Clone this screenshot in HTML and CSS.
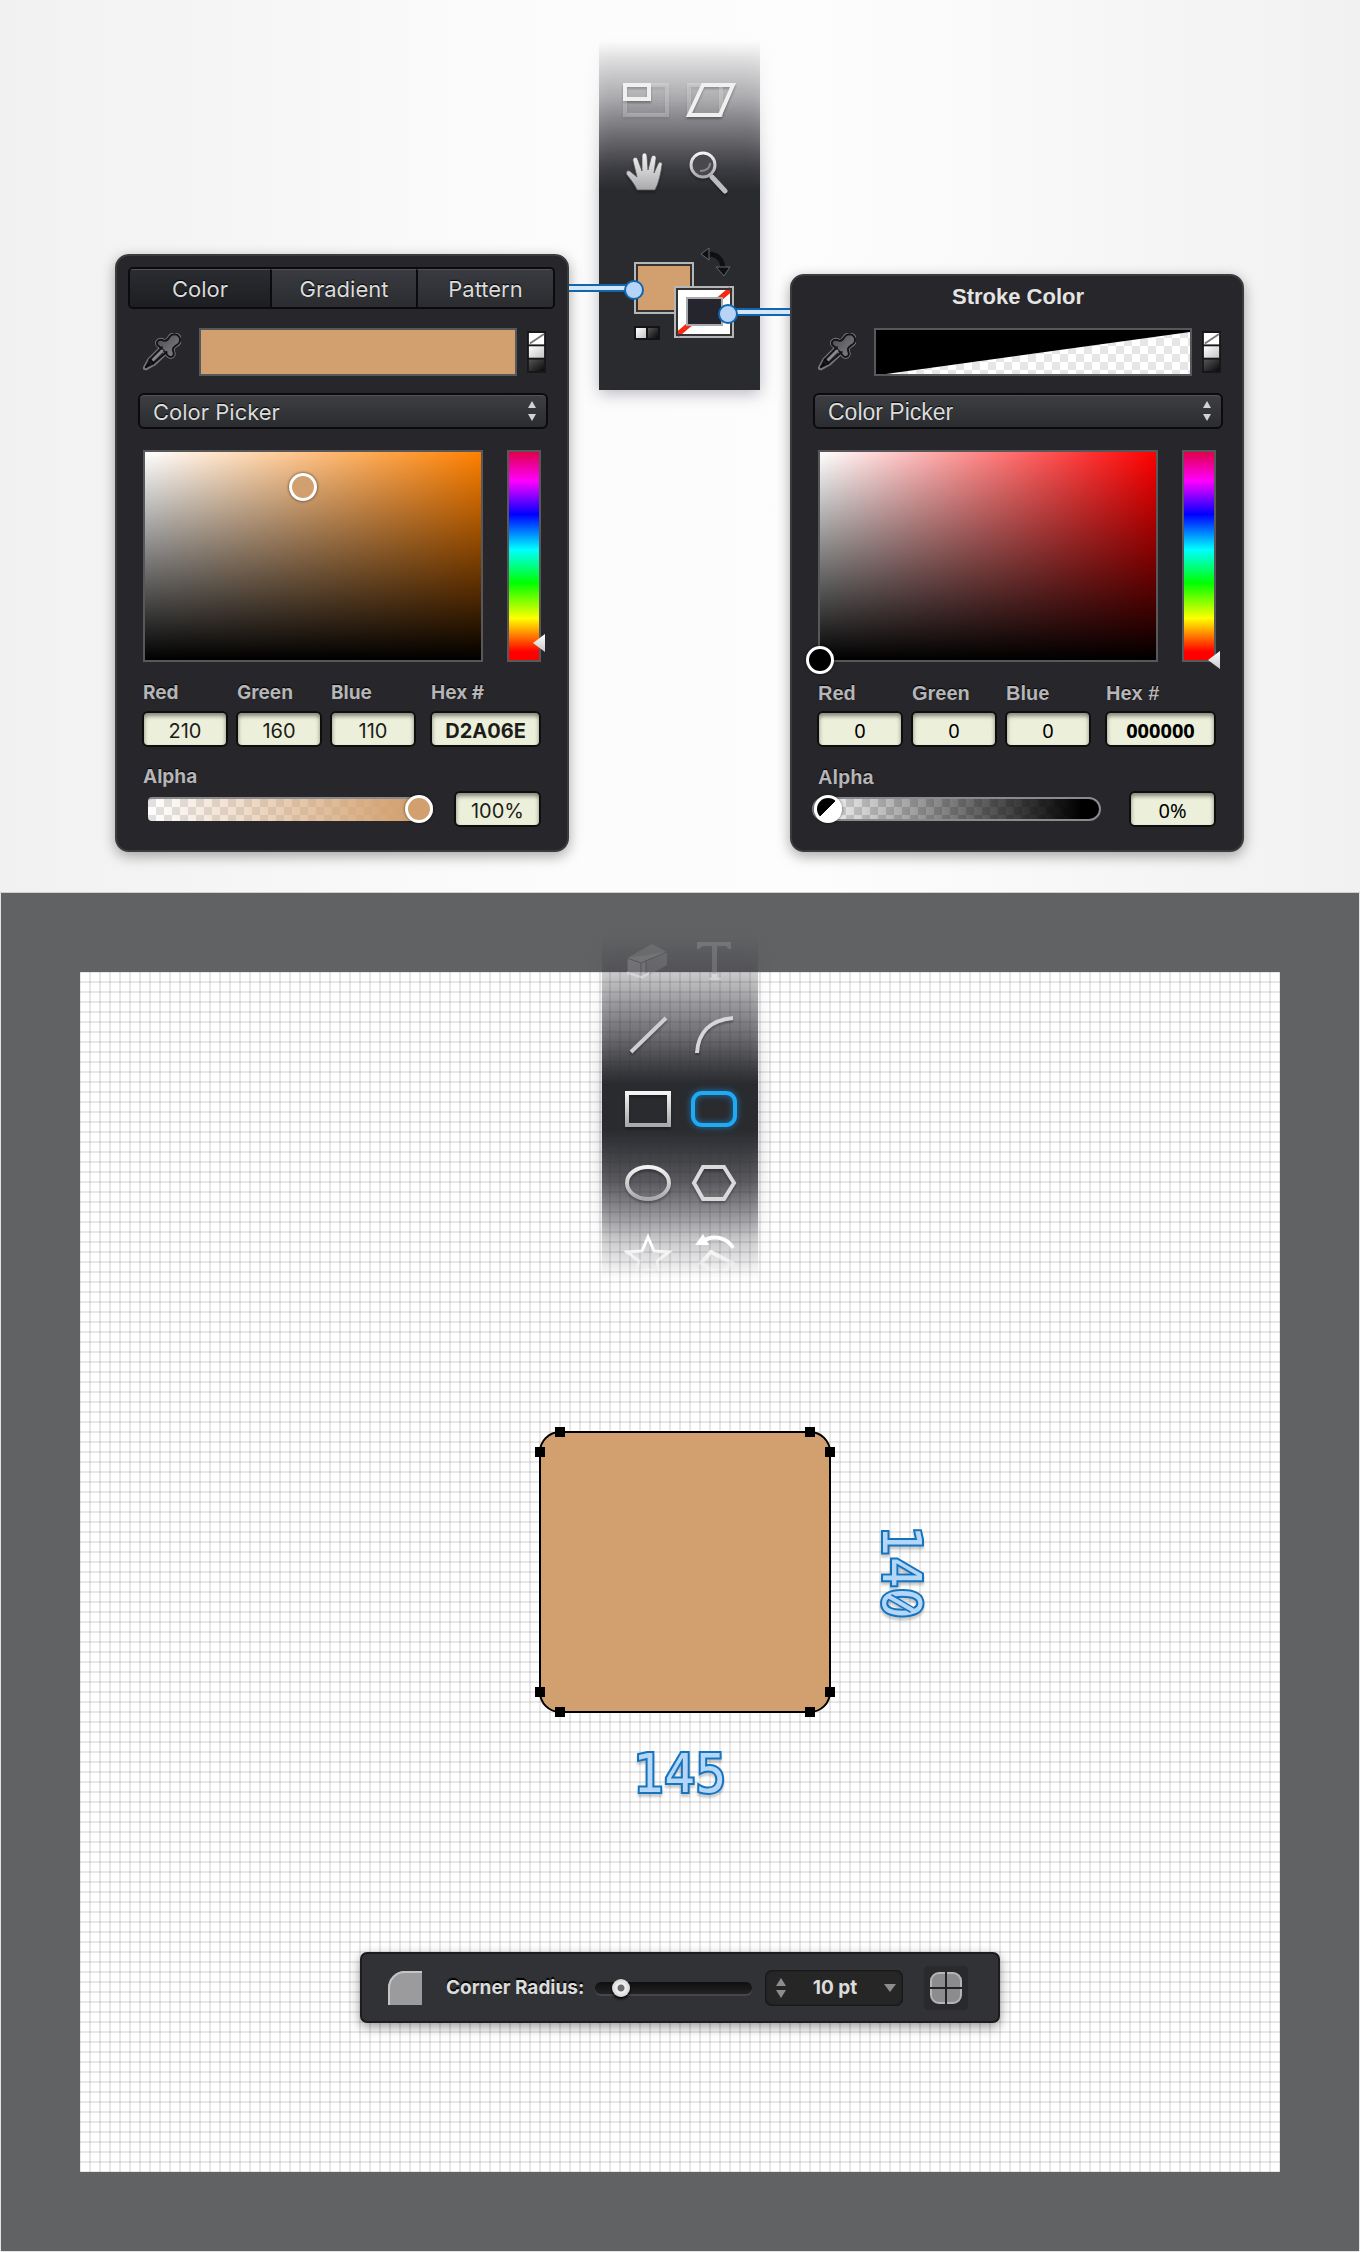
FILE: index.html
```html
<!DOCTYPE html>
<html lang="en">
<head>
<meta charset="utf-8">
<title>Rounded rectangle: fill and stroke</title>
<link rel="stylesheet" href="styles.css">
</head>
<body>
<svg class="defs" aria-hidden="true">
  <defs>
    <linearGradient id="metal" x1="0" y1="0" x2="0" y2="1"><stop offset="0" stop-color="#f4f4f4"/><stop offset="1" stop-color="#a9a9ab"/></linearGradient>
    <linearGradient id="rubber" x1="0" y1="0" x2="1" y2="1"><stop offset="0" stop-color="#4a4a4d"/><stop offset="1" stop-color="#85858a"/></linearGradient>
    <linearGradient id="light" x1="0" y1="0" x2="1" y2="1"><stop offset="0" stop-color="#fff"/><stop offset="1" stop-color="#c4c4c4"/></linearGradient>
    <linearGradient id="dark" x1="0" y1="0" x2="1" y2="1"><stop offset="0" stop-color="#555"/><stop offset="1" stop-color="#0a0a0a"/></linearGradient>
    <pattern id="checks" width="16" height="16" patternUnits="userSpaceOnUse"><rect width="16" height="16" fill="#fff"/><path d="M0 0h8v8H0zM8 8h8v8H8z" fill="#e6e6e6"/></pattern>
    <symbol id="dropper" viewBox="0 0 40 40">
      <g stroke-linejoin="round" stroke-linecap="round">
        <path d="M21 13 6 28 1 37l2 1 9-5 15-14z" fill="#29292d" stroke="#77777a" stroke-width="3"/>
        <path d="M15 9c2-3 5-2 7-1 3 1 4-1 6-4 3-4 8-3 10 0s1 7-3 9c-4 3-4 4-3 7 1 2 0 5-2 5-2 1-4-1-6-4l-7-7c-2-1-3-3-2-5z" fill="url(#rubber)" stroke="#77777a" stroke-width="4"/>
        <path d="M15 9c2-3 5-2 7-1 3 1 4-1 6-4 3-4 8-3 10 0s1 7-3 9c-4 3-4 4-3 7 1 2 0 5-2 5-2 1-4-1-6-4l-7-7c-2-1-3-3-2-5z" fill="url(#rubber)" stroke="#151518" stroke-width="2"/>
        <path d="M20 15 7 28l-4 8 8-4 14-12" fill="none" stroke="#151518" stroke-width="2"/>
        <path d="m20 19-9 9" fill="none" stroke="#8a8a8d" stroke-width="3"/>
        <path d="m7 28 4 4m-8 4 4-4" fill="none" stroke="#0c0c0d" stroke-width="2"/>
      </g>
    </symbol>
    <symbol id="presets" viewBox="0 0 20 44">
      <rect width="20" height="44" fill="#17171a"/>
      <rect x="2" y="2" width="16" height="12" fill="#fff"/><path d="M3 13 18 3" stroke="#77777a" stroke-width="2"/>
      <rect x="2" y="16" width="16" height="12" fill="url(#light)"/>
      <rect x="2" y="30" width="16" height="12" fill="url(#dark)"/>
    </symbol>
    <symbol id="updown" viewBox="0 0 8 20"><path d="M4 0 8 7H0zM4 20 0 13h8z" fill="#d2d2d2"/></symbol>
  </defs>
</svg>

<section class="stage">
  <form class="panel panel--fill" aria-label="Fill color">
    <div class="tabs">
      <button type="button" class="tab tab--active">Color</button>
      <button type="button" class="tab">Gradient</button>
      <button type="button" class="tab">Pattern</button>
    </div>
    <div class="swatch-row">
      <button type="button" class="bare" aria-label="Pick color from screen"><svg class="dropper"><use href="#dropper"/></svg></button>
      <span class="swatch swatch--tan"></span>
      <button type="button" class="bare" aria-label="Presets"><svg class="presets"><use href="#presets"/></svg></button>
    </div>
    <div class="picker">
      <select class="picker-select" aria-label="Picker mode"><option>Color Picker</option></select>
      <svg class="picker-arrows"><use href="#updown"/></svg>
    </div>
    <div class="spectrum">
      <div class="shade shade--orange"><button type="button" class="handle handle--tan" aria-label="Shade" style="left:47%;top:17%"></button></div>
      <div class="hue"><input class="hue-range" type="range" min="0" max="100" value="9" aria-label="Hue"></div>
    </div>
    <div class="fields">
      <label class="field">Red<input class="value" value="210"></label>
      <label class="field">Green<input class="value" value="160"></label>
      <label class="field">Blue<input class="value" value="110"></label>
      <label class="field field--hex">Hex #<input class="value value--hex" value="D2A06E"></label>
    </div>
    <div class="alpha">
      <label class="alpha-label" for="fill-alpha">Alpha</label>
      <div class="alpha-row">
        <input id="fill-alpha" class="alpha-range alpha-range--tan" type="range" value="100">
        <input class="value value--alpha" value="100%" aria-label="Alpha percentage">
      </div>
    </div>
  </form>

  <div class="strip strip--top">
    <div class="tools">
      <button type="button" class="tool" aria-label="Scale"><svg viewBox="0 0 52 48"><rect x="5" y="9" width="42" height="30" fill="none" stroke="#fff" stroke-opacity=".25" stroke-width="4"/><rect x="5" y="9" width="24" height="14" fill="#fff" fill-opacity=".12" stroke="#f0f0f0" stroke-width="4"/></svg></button>
      <button type="button" class="tool" aria-label="Shear"><svg viewBox="0 0 52 48"><rect x="4" y="9" width="32" height="30" fill="none" stroke="#fff" stroke-opacity=".25" stroke-width="4"/><path d="M18 9h30L35 39H4z" fill="#fff" fill-opacity=".1" stroke="#f0f0f0" stroke-width="4"/></svg></button>
      <button type="button" class="tool" aria-label="Hand"><svg viewBox="0 0 52 48"><path d="M17 42c-3-7-7-11-10-15-2-3 1-6 4-3l6 5-4-16c-1-4 4-5 5-1l4 11V8c0-4 5-4 5 0l1 14 3-12c1-4 6-3 5 1l-2 14 4-9c1-3 5-2 4 1-1 7-3 18-7 25z" fill="url(#metal)" stroke="#55565a" stroke-opacity=".8"/></svg></button>
      <button type="button" class="tool" aria-label="Zoom"><svg viewBox="0 0 52 48"><path d="m27 29 13 14" stroke="#bdbdbf" stroke-width="5" stroke-linecap="round"/><circle cx="18" cy="17" r="12" fill="#49494d" stroke="url(#metal)" stroke-width="3"/><path d="M25 15c0 5-4 8-10 8" fill="none" stroke="#8a8a8e" stroke-width="2"/></svg></button>
    </div>
    <div class="wells">
      <svg class="swap" viewBox="0 0 28 30"><path d="M5 6c12-1 17 7 17 15" fill="none" stroke="#101012" stroke-width="5"/><path d="M0 6 8 0v12zM15 19h14l-6 9z" fill="#101012" stroke="#66676a"/></svg>
      <button type="button" class="well well--fill" aria-label="Fill"></button>
      <button type="button" class="well well--stroke" aria-label="Stroke"><svg viewBox="0 0 54 46"><path d="M0 46 54 0" stroke="#f52a12" stroke-width="5"/><path d="M10 9h35v27H10z" fill="#24252d" stroke="#aaaaac" stroke-width="2"/></svg></button>
      <svg class="defaults" viewBox="0 0 26 14"><rect width="26" height="14" fill="#131316"/><rect x="2" y="2" width="10" height="10" fill="url(#light)"/><rect x="14" y="2" width="10" height="10" fill="url(#dark)"/></svg>
    </div>
    <span class="wire wire--left"></span>
    <span class="wire wire--right"></span>
  </div>

  <form class="panel panel--stroke" aria-label="Stroke color">
    <h2 class="panel-title">Stroke Color</h2>
    <div class="swatch-row">
      <button type="button" class="bare" aria-label="Pick color from screen"><svg class="dropper"><use href="#dropper"/></svg></button>
      <span class="swatch"><svg viewBox="0 0 314 44" preserveAspectRatio="none"><rect width="314" height="44" fill="url(#checks)"/><path d="M0 0h314v2L10 44H0z"/></svg></span>
      <button type="button" class="bare" aria-label="Presets"><svg class="presets"><use href="#presets"/></svg></button>
    </div>
    <div class="picker">
      <select class="picker-select" aria-label="Picker mode"><option>Color Picker</option></select>
      <svg class="picker-arrows"><use href="#updown"/></svg>
    </div>
    <div class="spectrum">
      <div class="shade shade--red"><button type="button" class="handle handle--black" aria-label="Shade" style="left:0%;top:100%"></button></div>
      <div class="hue"><input class="hue-range" type="range" min="0" max="100" value="1" aria-label="Hue"></div>
    </div>
    <div class="fields">
      <label class="field">Red<input class="value" value="0"></label>
      <label class="field">Green<input class="value" value="0"></label>
      <label class="field">Blue<input class="value" value="0"></label>
      <label class="field field--hex">Hex #<input class="value value--hex" value="000000"></label>
    </div>
    <div class="alpha">
      <label class="alpha-label" for="stroke-alpha">Alpha</label>
      <div class="alpha-row">
        <input id="stroke-alpha" class="alpha-range alpha-range--black" type="range" value="0">
        <input class="value value--alpha" value="0%" aria-label="Alpha percentage">
      </div>
    </div>
  </form>
</section>

<section class="desk">
  <div class="paper">
    <div class="strip strip--shapes">
      <div class="tools">
        <button type="button" class="tool tool--ghost" aria-label="Eraser"><svg viewBox="0 0 52 48"><path d="m5 21 25-14 15 8v13L22 41 5 34z" fill="#929295"/><path d="m5 21 14 5 26-11M19 26v15M5 21v13l14 8 5-4V24" fill="#fff" fill-opacity=".3" stroke="#505053"/><path d="m5 34 14 5 8-4v3l-7 4-15-5z" fill="#fff"/></svg></button>
        <button type="button" class="tool tool--ghost" aria-label="Text"><svg viewBox="0 0 52 48"><path d="M9 5h34v7h-2l-3-3h-9v31l4 1v2H21v-2l3-1V9h-9l-4 3H9z" fill="#a8a8ab"/><path d="M24 37h5v3l4 1v2H21v-2l3-1z" fill="#fff"/></svg></button>
        <button type="button" class="tool" aria-label="Line"><svg viewBox="0 0 52 48"><path d="M9 41 44 7" stroke="#cfcfd1" stroke-width="4"/></svg></button>
        <button type="button" class="tool" aria-label="Arc"><svg viewBox="0 0 52 48"><path d="M9 42C10 22 22 9 45 7" fill="none" stroke="#d6d6d8" stroke-width="4"/></svg></button>
        <button type="button" class="tool" aria-label="Rectangle"><svg viewBox="0 0 52 48"><rect x="5" y="8" width="42" height="32" fill="none" stroke="url(#metal)" stroke-width="4"/></svg></button>
        <button type="button" class="tool tool--active" aria-label="Rounded rectangle"><svg viewBox="0 0 52 48"><rect x="5" y="8" width="42" height="32" rx="9" fill="none" stroke="#1faaf3" stroke-width="4"/></svg></button>
        <button type="button" class="tool" aria-label="Ellipse"><svg viewBox="0 0 52 48"><ellipse cx="26" cy="24" rx="21" ry="16" fill="none" stroke="url(#metal)" stroke-width="4"/></svg></button>
        <button type="button" class="tool" aria-label="Polygon"><svg viewBox="0 0 52 48"><path d="M15 8h21l10 16-10 16H15L6 24z" fill="none" stroke="#dadadb" stroke-width="4"/></svg></button>
        <button type="button" class="tool tool--fading" aria-label="Star"><svg viewBox="0 0 52 48"><path d="m26 4 6 14 15 1-12 9 4 16-13-8-13 8 4-16L5 19l15-1z" fill="none" stroke="#fff" stroke-width="3"/></svg></button>
        <button type="button" class="tool tool--fading" aria-label="Rotate"><svg viewBox="0 0 52 48"><path d="m7 12 8-11 6 11z" fill="#fff"/><path d="M14 9c10-8 25-5 31 6M13 30l10-11 21 11-12 13z" fill="none" stroke="#fff" stroke-width="4"/></svg></button>
      </div>
    </div>
    <div class="object-row">
      <div class="object">
        <svg viewBox="0 0 300 290" aria-label="Selected rounded rectangle">
          <rect x="5" y="5" width="290" height="280" rx="20" fill="#d2a06e" stroke="#000" stroke-width="2"/>
          <path d="M20 0h10v10H20zM270 0h10v10h-10zM0 20h10v10H0zM290 20h10v10h-10zM0 260h10v10H0zM290 260h10v10h-10zM20 280h10v10H20zM270 280h10v10h-10z"/>
        </svg>
      </div>
      <span class="dimension dimension--height">140<svg class="zero-slash" viewBox="0 0 40 30"><path d="m9 9 22 13" stroke="#1474bd" stroke-width="7"/><path d="m7 8 26 15" stroke="#b4d6f8" stroke-width="4"/></svg></span>
    </div>
    <span class="dimension dimension--width">145</span>
    <form class="radius-bar">
      <svg class="corner" viewBox="0 0 34 34"><path d="M0 34V17A17 17 0 0 1 17 0h17v34z" fill="#9b9b9d"/><path d="M1 34V17A16 16 0 0 1 17 1h17" fill="none" stroke="#c4c4c6" stroke-width="2"/></svg>
      <label class="radius-label" for="radius">Corner Radius:</label>
      <input id="radius" class="radius-range" type="range" value="12">
      <div class="radius-field">
        <svg class="step" viewBox="0 0 10 20"><path d="m5 0 5 8H0zM5 20 0 12h10z" fill="#8d8d8f"/></svg>
        <input class="radius-value" value="10 pt" aria-label="Corner radius value">
        <svg class="drop" viewBox="0 0 12 8"><path d="M0 0h12L6 8z" fill="#8d8d8f"/></svg>
      </div>
      <button type="button" class="corners" aria-label="Choose corners"><svg viewBox="0 0 32 32"><rect x="1" y="1" width="30" height="30" rx="8" fill="#8c8c8f" stroke="#b5b5b7" stroke-width="2"/><path d="M16 0v32M0 16h32" stroke="#232326" stroke-width="2"/></svg></button>
    </form>
  </div>
</section>
</body>
</html>
```
FILE: styles.css
```css
* { box-sizing: border-box; }

body {
  margin: 0;
  padding-bottom: 1px;
  background: #e4e4e4;
  font-family: Inter, "Liberation Sans", sans-serif;
  color: #dcdcdc;
}

button, input, select { font: inherit; color: inherit; margin: 0; }
button { padding: 0; border: 0; background: none; }
svg { display: block; overflow: visible; }
.defs { position: absolute; width: 0; height: 0; }

/* upper half: both color panels joined to the tool strip */
.stage {
  display: flex;
  justify-content: center;
  align-items: flex-end;
  gap: 30px;
  padding: 40px 21px 40px 20px;
  border-bottom: 1px solid #cfcfd0;
  background: linear-gradient(to right, #f1f1f1, #fcfcfc 40%, #fdfdfd 60%, #f1f1f1);
}

.panel {
  width: 454px;
  padding: 11px 19px 23px 21px;
  border: 2px solid #3b3b3e;
  border-radius: 14px;
  background: #27262a;
  box-shadow: 0 4px 14px rgba(0, 0, 0, .35);
}
.panel--fill { margin-top: 214px; }
.panel--stroke { margin-top: 234px; font-family: "Liberation Sans", Arial, sans-serif; }

.panel-title {
  margin: 0 0 21px;
  font-size: 22px;
  line-height: 20px;
  font-weight: 700;
  text-align: center;
  color: #e4e4e4;
}

.tabs {
  display: grid;
  grid-template-columns: 140px 146px 1fr;
  height: 42px;
  margin: 0 -7px 19px -10px;
  border: 2px solid #0b0b0d;
  border-radius: 5px;
  overflow: hidden;
}
.tab {
  border-top: 1px solid #515357;
  background: linear-gradient(#393b40, #2a2c30);
  font-size: 22px;
  line-height: 34px;
  text-shadow: 0 -1px 1px #000;
}
.tab + .tab { border-left: 2px solid #0b0b0d; }
.tab--active { background: linear-gradient(#2b2c31, #1d1e21); }

.swatch-row {
  display: flex;
  align-items: center;
  gap: 10px;
  padding: 0 2px 0 5px;
  margin-bottom: 17px;
}
.dropper { width: 38px; height: 38px; margin-right: 8px; }
.presets { width: 19px; height: 44px; }
.swatch { flex: 1; height: 48px; border: 2px solid #58585b; }
.swatch svg { width: 100%; height: 100%; }
.swatch--tan { background: #d2a06e; }

.picker { position: relative; margin-bottom: 21px; }
.picker-select {
  appearance: none;
  display: block;
  width: 100%;
  height: 36px;
  padding: 2px 13px 0;
  border: 2px solid #0b0b0d;
  border-radius: 6px;
  background: linear-gradient(#3d3f43, #2a2c30);
  box-shadow: inset 0 1px #505256;
  font-size: 22px;
  line-height: 30px;
  text-shadow: 0 -1px 1px #000;
}
.panel--stroke .picker-select { font-size: 23px; }
.picker-arrows {
  position: absolute;
  top: 8px;
  right: 12px;
  width: 8px;
  height: 20px;
  pointer-events: none;
}

.spectrum { display: flex; gap: 24px; padding: 0 7px 0 5px; margin-bottom: 19px; }
.shade { position: relative; flex: 1; height: 212px; border: 2px solid #58585b; }
.shade--orange { background: linear-gradient(to top, #000, transparent), linear-gradient(to right, #fff, #ff8000); }
.shade--red { background: linear-gradient(to top, #000, transparent), linear-gradient(to right, #fff, #f00); }
.handle {
  position: absolute;
  width: 28px;
  height: 28px;
  margin: -14px;
  border: 3px solid #fff;
  border-radius: 50%;
  box-shadow: 0 0 3px rgba(0, 0, 0, .7);
}
.handle--tan { background: #d2a06e; }
.handle--black { background: #000; }

.hue {
  position: relative;
  width: 34px;
  border: 2px solid #58585b;
  background: linear-gradient(#e0004a, #f0f 14%, #00f 30%, #0ff 47%, #0f0 63%, #ff0 80%, #f00 96%);
}
.hue-range {
  appearance: none;
  writing-mode: vertical-lr;
  direction: rtl;
  position: absolute;
  top: -11px;
  left: 24px;
  width: 12px;
  height: 230px;
  background: none;
}
.hue-range::-webkit-slider-thumb {
  appearance: none;
  width: 12px;
  height: 18px;
  background: linear-gradient(#fff, #c9c9c9);
  clip-path: polygon(0 50%, 100% 0, 100% 100%);
}

.fields { display: grid; grid-template-columns: 1fr 1fr 1fr 117px; gap: 8px; padding: 0 7px 0 4px; margin-bottom: 18px; }
.field, .alpha-label {
  display: block;
  font-size: 19px;
  line-height: 24px;
  font-weight: 700;
  color: #b6b6b8;
  text-indent: 1px;
  text-shadow: 0 -1px 1px #000;
}
.field--hex { padding-left: 6px; }
.panel--stroke .field, .panel--stroke .alpha-label { font-size: 20px; }

.value {
  display: block;
  width: 100%;
  height: 36px;
  margin-top: 6px;
  padding: 3px 0 0;
  border: 2px solid #0e0e0d;
  border-radius: 6px;
  background: #ecf0da;
  box-shadow: inset 0 3px 4px rgba(0, 0, 0, .45);
  font-family: Inter, "Liberation Sans", sans-serif;
  font-size: 20px;
  font-weight: 400;
  line-height: 28px;
  text-align: center;
  text-indent: 0;
  color: #1c1d19;
}
.value--hex { font-weight: 700; }
.panel--stroke .value { font-family: "Noto Sans", "Liberation Sans", sans-serif; color: #000; }

.alpha { padding: 0 7px 0 4px; }
.alpha-row { display: flex; align-items: center; justify-content: space-between; margin-top: 2px; }
.value--alpha { width: 87px; margin-top: 0; }
.alpha-range {
  appearance: none;
  width: 285px;
  height: 24px;
  margin-left: 6px;
  background: none;
}
.alpha-range::-webkit-slider-runnable-track {
  height: 24px;
  border: 2px solid #8b8b8d;
  border-radius: 12px;
}
.alpha-range--tan::-webkit-slider-runnable-track {
  border-width: 2px 0 0;
  border-radius: 4px 12px 12px 4px;
  background:
    linear-gradient(to right, rgba(210, 160, 110, 0), #d2a06e 92%),
    repeating-conic-gradient(#fff 0 25%, #e2e2e2 0 50%) 0 0 / 16px 16px;
}
.alpha-range--black { width: 289px; margin-left: -5px; }
.alpha-range--black::-webkit-slider-runnable-track {
  background:
    linear-gradient(to right, rgba(0, 0, 0, 0), #000 94%),
    repeating-conic-gradient(#fff 0 25%, #dcdcdc 0 50%) 0 0 / 16px 16px;
}
.alpha-range::-webkit-slider-thumb {
  appearance: none;
  width: 28px;
  height: 28px;
  margin-top: -4px;
  border: 3px solid #fff;
  border-radius: 50%;
  background: #d2a06e;
  box-shadow: 0 0 3px rgba(0, 0, 0, .6);
}
.alpha-range--black::-webkit-slider-thumb { background: linear-gradient(135deg, #000 50%, #fff 50%); }

/* tool strips fade out into the page */
.strip { position: relative; }
.strip::before {
  content: "";
  position: absolute;
  inset: 0;
  filter: drop-shadow(0 4px 8px rgba(40, 30, 60, .3));
}
.strip > * { position: relative; }
.strip--top { align-self: flex-start; width: 161px; padding: 24px 16px 50px 14px; }
.strip--top::before {
  background: linear-gradient(rgba(42, 43, 47, 0), rgba(42, 43, 47, .12) 20px, rgba(42, 43, 47, .34) 60px, rgba(42, 43, 47, .65) 100px, rgba(42, 43, 47, .88) 128px, #2a2b2f 150px);
}
.tools { display: grid; grid-template-columns: 1fr 1fr; }
.tool { display: grid; place-items: center; height: 72px; }
.tool svg { width: 52px; height: 48px; filter: drop-shadow(0 2px 1px rgba(0, 0, 0, .3)); }

.wells { height: 96px; margin-top: 36px; }
.wells > * { position: absolute; }
.well { width: 60px; height: 52px; border: 2px solid #b4b6b7; outline: 2px solid #333; outline-offset: -4px; }
.well--fill { left: 21px; top: 18px; background: #d2a06e; }
.well--stroke { left: 61px; top: 42px; padding: 1px; background: #fff; }
.well--stroke svg { width: 54px; height: 46px; }
.swap { left: 88px; top: 4px; width: 28px; height: 30px; }
.defaults { left: 21px; top: 82px; width: 26px; height: 14px; }

.strip > .wire {
  position: absolute;
  height: 8px;
  border: solid #1067ae;
  border-width: 2px 0;
  background: #d5e6f9;
}
.strip > .wire::after {
  content: "";
  position: absolute;
  top: -6px;
  width: 16px;
  height: 16px;
  border: 2px solid #1067ae;
  border-radius: 50%;
  background: #b7d3f8;
}
.strip > .wire--left { left: -30px; top: 244px; width: 60px; }
.wire--left::after { right: -15px; }
.strip > .wire--right { right: -30px; top: 268px; width: 57px; }
.wire--right::after { left: -15px; }

/* lower half: the drawing */
.desk { margin: 0 1px; padding: 79px; background: #616264; }
.paper {
  display: flex;
  flex-direction: column;
  align-items: center;
  aspect-ratio: 1;
  background:
    linear-gradient(rgba(0, 0, 0, .09) 2px, transparent 2px) 0 9px / 10px 10px,
    linear-gradient(to right, rgba(0, 0, 0, .09) 2px, transparent 2px) 9px 0 / 10px 10px,
    #fff;
}
.strip--shapes { width: 156px; margin-top: -48px; padding: 0 11px 0 13px; }
.strip--shapes::before {
  background: linear-gradient(rgba(42, 43, 47, 0) 11px, rgba(42, 43, 47, .2) 48px, rgba(42, 43, 47, .62) 112px, #2a2b2f 160px, #2a2b2f 206px, rgba(42, 43, 47, .72) 256px, rgba(42, 43, 47, .2) 315px, rgba(42, 43, 47, 0) 355px);
}
.strip--shapes .tool { height: 74px; }
.tool--ghost { opacity: .3; }
.strip--shapes .tool--ghost svg, .strip--shapes .tool--fading svg { filter: none; }
.tool--active svg { filter: drop-shadow(0 0 3px #1480c8); }
.tool--fading { mask-image: linear-gradient(#000 35%, transparent 75%); }

.object-row {
  display: grid;
  grid-template-columns: 1fr 300px 1fr;
  align-items: center;
  width: 100%;
  margin-top: 133px;
  padding-left: 10px;
}
.object { grid-column: 2; }
.dimension {
  font-family: "DejaVu Sans Condensed", "DejaVu Sans", sans-serif;
  font-size: 54px;
  line-height: 54px;
  color: #b4d6f8;
  -webkit-text-stroke: 4px #1474bd;
  paint-order: stroke fill;
  filter: drop-shadow(0 3px 1px rgba(0, 0, 0, .2));
}
.dimension--height { position: relative; justify-self: start; writing-mode: vertical-rl; margin-left: 39px; }
.zero-slash { position: absolute; left: 7px; bottom: 0; width: 40px; height: 30px; }
.dimension--width { margin-top: 30px; }

.radius-bar {
  display: flex;
  align-items: center;
  width: 640px;
  height: 71px;
  margin: auto 0 149px;
  padding: 0 30px 0 26px;
  border: 2px solid #1c1c1f;
  border-radius: 7px;
  background: #313235;
  box-shadow: 0 4px 12px rgba(0, 0, 0, .4);
}
.corner { width: 34px; height: 34px; }
.radius-label {
  width: 149px;
  margin-left: 24px;
  font-size: 19px;
  line-height: 24px;
  font-weight: 700;
  text-shadow: 0 -2px 1px #000;
  white-space: nowrap;
}
.radius-range { appearance: none; width: 157px; height: 20px; background: none; }
.radius-range::-webkit-slider-runnable-track {
  height: 12px;
  border-radius: 6px;
  background: linear-gradient(#0f0f10, #232325);
  box-shadow: 0 2px #46474a;
}
.radius-range::-webkit-slider-thumb {
  appearance: none;
  width: 18px;
  height: 18px;
  margin-top: -3px;
  border-radius: 50%;
  background: radial-gradient(circle, #6b6b6b 3px, #f2f2f2 4px, #bdbdbd);
  box-shadow: 0 2px 3px #000;
}
.radius-field {
  display: flex;
  align-items: center;
  width: 138px;
  height: 36px;
  margin-left: 13px;
  padding: 0 7px 0 11px;
  border-radius: 7px;
  background: #262627;
  box-shadow: inset 0 0 2px 1px #141416;
}
.step { width: 10px; height: 20px; }
.radius-value {
  flex: 1;
  min-width: 0;
  padding: 0;
  border: 0;
  background: none;
  font-size: 19px;
  font-weight: 700;
  text-align: center;
}
.drop { width: 12px; height: 8px; }
.corners {
  display: grid;
  place-items: center;
  width: 44px;
  height: 44px;
  margin-left: auto;
  border-radius: 4px;
  background: #2a2a2d;
}
.corners svg { width: 32px; height: 32px; }
```
